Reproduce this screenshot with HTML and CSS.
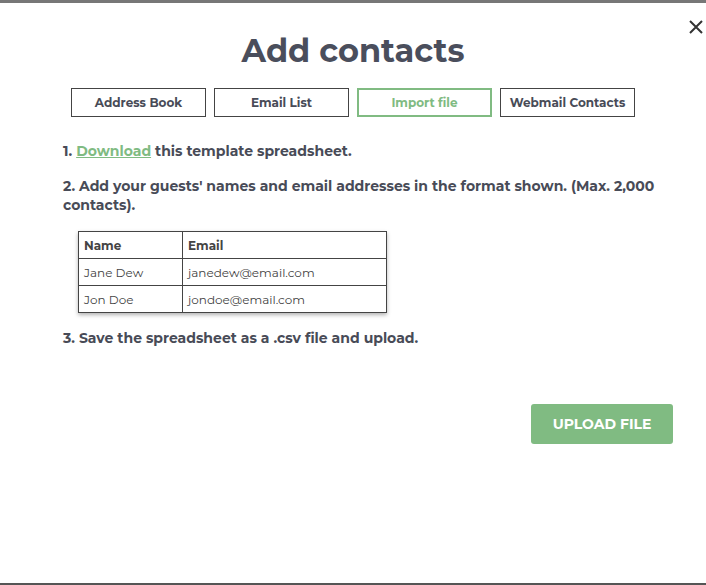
FILE: index.html
```html
<!DOCTYPE html>
<html>
<head>
<meta charset="utf-8">
<link rel="stylesheet" href="styles.css">
</head>
<body>
<div class="modal">
  <button class="close" aria-label="Close">
    <svg width="14" height="14" viewBox="0 0 14 14"><path d="M1 1L13 13M13 1L1 13" stroke="#333" stroke-width="2" fill="none"/></svg>
  </button>
  <h1 class="title">Add contacts</h1>
  <div class="tabs">
    <div class="tab">Address Book</div>
    <div class="tab">Email List</div>
    <div class="tab active">Import file</div>
    <div class="tab">Webmail Contacts</div>
  </div>
  <div class="content">
    <p class="step">1. <a href="#" class="link">Download</a> this template spreadsheet.</p>
    <p class="step">2. Add your guests' names and email addresses in the format shown. (Max. 2,000 contacts).</p>
    <table class="sample">
      <tr><th class="c1">Name</th><th>Email</th></tr>
      <tr><td class="c1">Jane Dew</td><td>janedew@email.com</td></tr>
      <tr><td class="c1">Jon Doe</td><td>jondoe@email.com</td></tr>
    </table>
    <p class="step">3. Save the spreadsheet as a .csv file and upload.</p>
    <div class="actions">
      <button class="upload">UPLOAD FILE</button>
    </div>
  </div>
</div>
</body>
</html>
```
FILE: styles.css
```css
html, body {
  margin: 0;
  padding: 0;
  background: #fff;
}
body {
  font-family: "Montserrat", "DejaVu Sans", sans-serif;
  color: #484b57;
}
.modal {
  position: relative;
  box-sizing: border-box;
  height: 585px;
  border-top: 3px solid #777;
  border-bottom: 2px solid #555;
}
.close {
  position: absolute;
  top: 17px;
  right: 3px;
  background: none;
  border: 0;
  padding: 0;
  width: 14px;
  height: 14px;
}
.close svg { display: block; }
.title {
  margin: 0;
  padding-top: 30px;
  text-align: center;
  font-size: 32px;
  line-height: 36px;
  font-weight: bold;
  color: #4a4e5c;
}
.tabs {
  display: flex;
  justify-content: center;
  gap: 8px;
  margin-top: 19px;
}
.tab {
  box-sizing: border-box;
  width: 135px;
  height: 29px;
  border: 1px solid #444;
  display: flex;
  align-items: center;
  justify-content: center;
  font-size: 12px;
  font-weight: bold;
  color: #484b57;
}
.tab.active {
  border: 2px solid #80bb82;
  color: #80bb82;
}
.content {
  padding: 0 33px 0 63px;
}
.step {
  margin: 0;
  font-size: 14px;
  font-weight: bold;
  line-height: 19px;
}
.step:first-child { margin-top: 25px; }
.step + .step { margin-top: 16px; }
.link {
  color: #80bb82;
  text-decoration: underline;
}
.sample {
  border-collapse: collapse;
  margin: 16px 0 0 15px;
  width: 309px;
  box-shadow: 0 2px 4px rgba(0,0,0,0.3);
  font-size: 12px;
}
.sample th, .sample td {
  border: 1px solid #444;
  height: 26px;
  padding: 0 5px;
  text-align: left;
  color: #444;
}
.sample th { font-weight: bold; }
.sample td { font-weight: normal; }
.sample .c1 { width: 93px; }
.sample + .step { margin-top: 16px; }
.actions {
  display: flex;
  justify-content: flex-end;
  margin-top: 56px;
}
.upload {
  width: 142px;
  height: 40px;
  border: 0;
  border-radius: 3px;
  background: #80bb82;
  color: #fff;
  font-family: inherit;
  font-size: 14px;
  font-weight: bold;
}
```
